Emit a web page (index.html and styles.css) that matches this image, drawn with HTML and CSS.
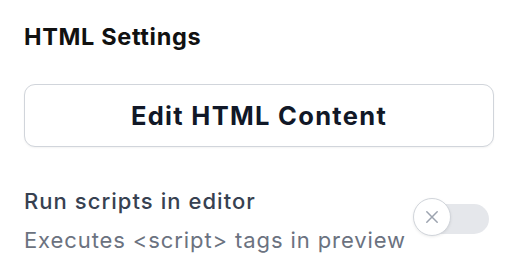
FILE: index.html
```html
<!DOCTYPE html>
<html lang="en">
<head>
    <meta charset="UTF-8">
    <meta name="viewport" content="width=device-width, initial-scale=1.0">
    <title>HTML Settings</title>
    <link rel="stylesheet" href="styles.css">
</head>
<body>
    <div class="panel">
        <h2 class="title">HTML Settings</h2>
        <button class="edit-btn">Edit HTML Content</button>
        <div class="setting">
            <div class="setting-text">
                <div class="setting-label">Run scripts in editor</div>
                <div class="setting-desc">Executes &lt;script&gt; tags in preview</div>
            </div>
            <div class="toggle">
                <div class="knob">
                    <svg width="16" height="16" viewBox="0 0 16 16">
                        <path d="M2.8 2.8 L13.2 13.2 M13.2 2.8 L2.8 13.2" stroke="#9ca3af" stroke-width="1.5" stroke-linecap="round" fill="none"/>
                    </svg>
                </div>
            </div>
        </div>
    </div>
</body>
</html>
```

FILE: styles.css
```css
body {
    margin: 0;
    font-family: 'Inter', 'Noto Sans', sans-serif;
    background-color: #ffffff;
}
.panel {
    padding: 23px 24px 24px 24px;
}
.title {
    margin: 0;
    font-size: 23.5px;
    line-height: 28px;
    font-weight: 700;
    letter-spacing: 0.65px;
    color: #111111;
}
.edit-btn {
    display: block;
    width: 470px;
    height: 63px;
    margin-top: 33px;
    border: 1.5px solid #d1d5db;
    border-radius: 11px;
    background: #ffffff;
    font-family: inherit;
    font-size: 25.5px;
    font-weight: 700;
    letter-spacing: 1.3px;
    color: #111827;
    box-shadow: 0 1px 2px rgba(0, 0, 0, 0.05);
    cursor: pointer;
}
.setting {
    display: flex;
    align-items: center;
    margin-top: 39px;
}
.setting-text {
    flex: 0 0 auto;
}
.setting-label {
    font-size: 22px;
    line-height: 30px;
    font-weight: 500;
    letter-spacing: 1.05px;
    color: #374151;
}
.setting-desc {
    font-size: 22px;
    line-height: 30px;
    letter-spacing: 0.9px;
    color: #6b7280;
    margin-top: 9px;
}
.toggle {
    position: relative;
    width: 69px;
    height: 30px;
    margin-left: 14px;
    margin-top: -3px;
    border-radius: 15px;
    background: #e5e7eb;
}
.knob {
    position: absolute;
    left: -7px;
    top: -6px;
    box-sizing: border-box;
    width: 38px;
    height: 38px;
    border: 1.5px solid #d1d5db;
    border-radius: 50%;
    background: #ffffff;
    box-shadow: 0 1px 3px rgba(0, 0, 0, 0.08);
    display: flex;
    align-items: center;
    justify-content: center;
}
```
